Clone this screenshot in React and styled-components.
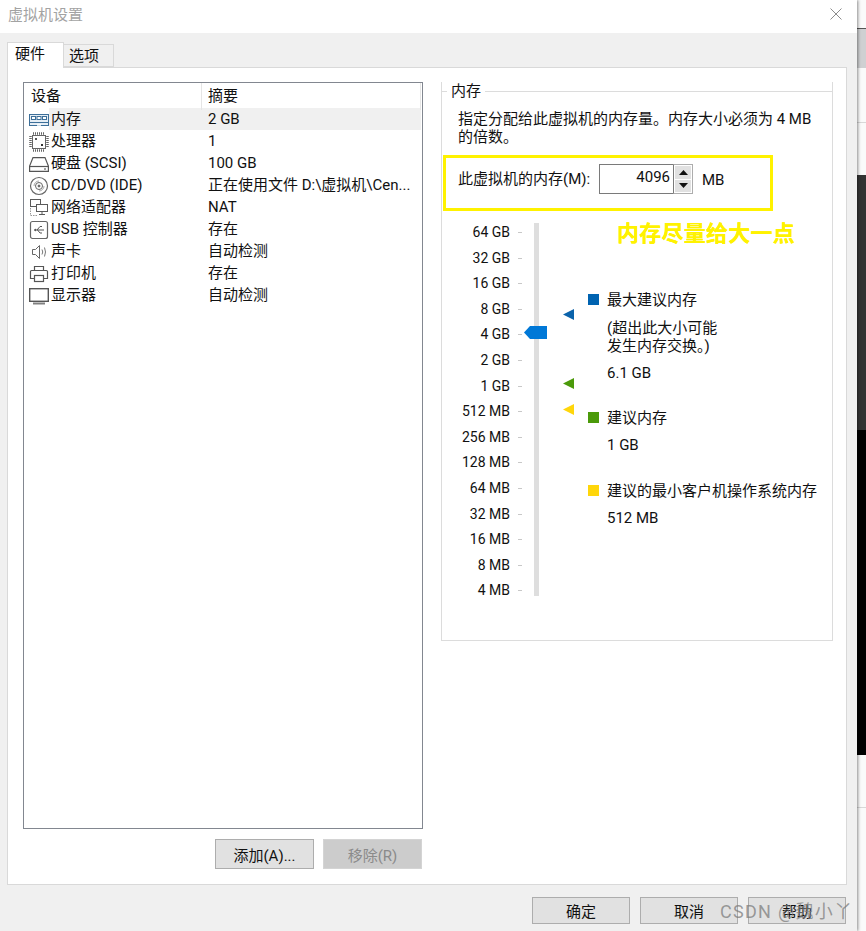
import React from "react"
import styled, { createGlobalStyle } from "styled-components"

const GlobalStyle = createGlobalStyle`
  html, body {
    margin: 0;
    padding: 0;
    background: #fff;
  }
  body {
    font-family: Roboto, "Noto Sans CJK SC", sans-serif;
    font-size: 15px;
    color: #111;
  }
`

const Page = styled.div`
  display: flex;
  width: 866px;
  height: 931px;
  overflow: hidden;
  position: relative;
`
const Dialog = styled.div`
  width: 857px;
  height: 931px;
  flex: none;
  display: flex;
  flex-direction: column;
  background: #f0f0f0;
  position: relative;
  z-index: 1;
  box-shadow: 1px 0 3px rgba(0, 0, 0, 0.45);
`
const TitleBar = styled.div`
  box-sizing: border-box;
  height: 33px;
  flex: none;
  background: #fff;
  display: flex;
  align-items: center;
  justify-content: space-between;
  padding: 0 15px 6px 8px;
  color: #a3a3a3;
`
const Body = styled.div`
  padding: 9px 10px 0 7px;
  flex: 1;
  display: flex;
  flex-direction: column;
`
const Tabs = styled.div`
  display: flex;
  align-items: flex-end;
  height: 25px;
  flex: none;
  position: relative;
  z-index: 1;
`
const Tab = styled.div`
  box-sizing: border-box;
  width: ${p => (p.$active ? "57px" : "50px")};
  height: ${p => (p.$active ? "26px" : "23px")};
  margin-bottom: ${p => (p.$active ? "-1px" : "0")};
  padding: ${p => (p.$active ? "0 0 0 7px" : "0 0 0 5px")};
  background: ${p => (p.$active ? "#fff" : "#f0f0f0")};
  border: 1px solid #d9d9d9;
  border-bottom-width: ${p => (p.$active ? "0" : "1px")};
  border-left-width: ${p => (p.$active ? "1px" : "0")};
  line-height: 22px;
`
const Panel = styled.div`
  box-sizing: border-box;
  width: 840px;
  height: 818px;
  flex: none;
  display: flex;
  background: #fff;
  border: 1px solid #d9d9d9;
  padding: 14px 13px 0 15px;
`
const LeftColumn = styled.div`
  width: 400px;
  margin-right: 18px;
  flex: none;
`
const DeviceList = styled.div`
  box-sizing: border-box;
  height: 747px;
  border: 1px solid #828790;
  padding: 0 1px;
`
const ListHeader = styled.div`
  display: grid;
  grid-template-columns: 177px 1fr;
  height: 25px;
`
const HeaderCell = styled.div`
  padding-left: 6px;
  line-height: 27px;
  border-right: 1px solid #e5e5e5;
`
const DeviceRow = styled.div`
  display: grid;
  grid-template-columns: 177px 1fr;
  height: 22px;
  line-height: 23px;
  background: ${p =>
    p.$selected ? "linear-gradient(to right, #fff 24px, #f0f0f0 24px)" : "none"};
`
const DeviceName = styled.div`
  display: flex;
  align-items: center;
  padding-left: 4px;
  white-space: nowrap;
`
const IconSlot = styled.span`
  width: 20px;
  height: 20px;
  margin-right: 2px;
  flex: none;
  display: block;
  svg {
    display: block;
  }
`
const Summary = styled.div`
  padding-left: 6px;
  white-space: nowrap;
`
const ListActions = styled.div`
  display: flex;
  justify-content: flex-end;
  gap: 9px;
  margin-top: 10px;
  padding-right: 1px;
`
const Button = styled.button`
  box-sizing: border-box;
  width: ${p => (p.$dialog ? "98px" : "99px")};
  height: ${p => (p.$dialog ? "27px" : "30px")};
  padding: 0;
  font: inherit;
  color: ${p => (p.disabled ? "#8a8a8a" : "#111")};
  background: ${p => (p.disabled ? "#cccccc" : "#e1e1e1")};
  border: 1px solid ${p => (p.disabled ? "#d4d4d4" : "#adadad")};
`
const MemoryGroup = styled.section`
  box-sizing: border-box;
  width: 392px;
  height: 559px;
  border: 1px solid #dcdcdc;
  border-top: none;
  position: relative;
  &::before {
    content: "";
    position: absolute;
    top: 9px;
    left: -1px;
    right: -1px;
    border-top: 1px solid #dcdcdc;
  }
`
const GroupLegend = styled.div`
  position: absolute;
  top: 1px;
  left: 5px;
  padding: 0 4px;
  background: #fff;
  line-height: 17px;
`
const Description = styled.p`
  margin: 0;
  padding: 28px 16px 0 16px;
  line-height: 18px;
`
const MarkedRow = styled.div`
  box-sizing: border-box;
  width: 330px;
  height: 56px;
  margin: 9px 0 0 1px;
  border: 3px solid #fff200;
  padding: 6px 0 0 12px;
  display: flex;
  align-items: flex-start;
`
const FieldLabel = styled.span`
  line-height: 30px;
  width: 141px;
  flex: none;
  white-space: nowrap;
`
const Spinner = styled.div`
  width: 94px;
  height: 30px;
  flex: none;
  display: flex;
`
const SpinnerValue = styled.div`
  box-sizing: border-box;
  width: 74px;
  border: 1px solid #7a7a7a;
  border-right: none;
  text-align: right;
  line-height: 24px;
  padding-right: 3px;
`
const SpinnerButtons = styled.div`
  box-sizing: border-box;
  width: 20px;
  padding: 1px;
  display: flex;
  flex-direction: column;
  gap: 1px;
  flex: none;
  border: 1px solid #adadad;
  border-left-color: #7a7a7a;
`
const SpinnerButton = styled.div`
  flex: 1;
  display: flex;
  align-items: center;
  justify-content: center;
  background: #e1e1e1;
`
const UnitLabel = styled.span`
  margin-left: 9px;
  line-height: 33px;
`
const Annotation = styled.div`
  position: absolute;
  left: 175px;
  top: 139px;
  font-size: 22px;
  line-height: 26px;
  font-weight: 700;
  letter-spacing: 0.25px;
  color: #fff200;
  text-shadow: 0 0 0.6px #fff200;
  white-space: nowrap;
`
const SliderArea = styled.div`
  display: flex;
  margin: 12px 0 0 0;
`
const ScaleLabels = styled.div`
  width: 80px;
  padding-top: 1px;
  flex: none;
`
const ScaleLabel = styled.div`
  box-sizing: border-box;
  height: 25.6px;
  line-height: 16px;
  font-size: 14px;
  padding-right: 12px;
  text-align: right;
  white-space: nowrap;
  position: relative;
  &::after {
    content: "";
    position: absolute;
    right: 0;
    top: 8px;
    width: 4px;
    height: 1px;
    background: #c8c8c8;
  }
`
const Track = styled.div`
  width: 5px;
  height: 373px;
  margin-left: 12px;
  background: #dedede;
  flex: none;
  position: relative;
`
const Thumb = styled.svg`
  position: absolute;
  left: -10px;
  top: 103px;
`
const MarkerLane = styled.div`
  width: 49px;
  flex: none;
  position: relative;
`
const Marker = styled.svg`
  position: absolute;
  left: 24px;
  top: ${p => p.$top}px;
`
const Legend = styled.div`
  display: flex;
  flex-direction: column;
  padding-top: 68px;
`
const LegendBlock = styled.div`
  display: grid;
  grid-template-columns: 11px 1fr;
  column-gap: 8px;
  margin-bottom: ${p => p.$gap || 0}px;
  white-space: nowrap;
`
const Swatch = styled.span`
  width: 11px;
  height: 11px;
  margin-top: 3px;
  background: ${p => p.$color};
`
const LegendTitle = styled.div`
  line-height: 18px;
`
const LegendNote = styled.div`
  grid-column: 2;
  line-height: 18px;
  margin-top: 10px;
`
const LegendValue = styled.div`
  grid-column: 2;
  line-height: 18px;
  margin-top: 9px;
`
const Footer = styled.div`
  display: flex;
  justify-content: flex-end;
  gap: 10px;
  margin: 12px 1px 0 0;
`
const Backdrop = styled.div`
  flex: 1;
  display: flex;
  flex-direction: column;
`
const BackdropPiece = styled.div`
  box-sizing: border-box;
  height: ${p => p.$height}px;
  flex: ${p => (p.$height ? "none" : 1)};
  background: ${p => p.$color};
  border-top: ${p => (p.$line ? `1px solid ${p.$line}` : "none")};
`
const Watermark = styled.div`
  position: absolute;
  z-index: 2;
  left: 720px;
  top: 900px;
  font-size: 18px;
  line-height: 24px;
  color: rgba(125, 125, 125, 0.75);
  letter-spacing: 1.3px;
  white-space: nowrap;
`

const CloseIcon = () => (
  <svg width="12" height="12" viewBox="0 0 12 12" fill="none" stroke="#8c8c8c" strokeWidth="1">
    <path d="M0.5 0.5 L11.5 11.5 M11.5 0.5 L0.5 11.5" />
  </svg>
)

const MemoryIcon = () => (
  <svg width="20" height="20" viewBox="0 0 20 20" fill="none">
    <rect x="0.5" y="4.5" width="19" height="11" fill="#e6eef5" stroke="#3d6f99" />
    <rect x="2.5" y="6.5" width="4" height="3" fill="#fff" stroke="#3d6f99" />
    <rect x="8" y="6.5" width="4" height="3" fill="#fff" stroke="#3d6f99" />
    <rect x="13.5" y="6.5" width="4" height="3" fill="#fff" stroke="#3d6f99" />
    <path d="M1 12.5 H19" stroke="#3d6f99" />
    <path d="M8 15 H12" stroke="#fff" strokeWidth="1.5" />
  </svg>
)

const CpuIcon = () => (
  <svg width="20" height="20" viewBox="0 0 20 20" fill="none">
    <rect x="3.5" y="3.5" width="13" height="13" stroke="#666" />
    <path
      d="M4 1.5 H16 M4 18.5 H16 M1.5 4 V16 M18.5 4 V16"
      stroke="#666"
      strokeWidth="2.5"
      strokeDasharray="1 1"
    />
    <rect x="6" y="6" width="2" height="2" fill="#555" />
    <rect x="12" y="12" width="2" height="2" fill="#333" />
  </svg>
)

const DiskIcon = () => (
  <svg width="20" height="20" viewBox="0 0 20 20" fill="none" stroke="#555" strokeWidth="1.2">
    <path d="M4 3.6 H16 L19.4 12 V17.4 H0.6 V12 Z" />
    <path d="M0.6 12.5 H19.4" />
    <path d="M15 15 H17" stroke="#444" />
  </svg>
)

const CdIcon = () => (
  <svg width="20" height="20" viewBox="0 0 20 20" fill="none" stroke="#666">
    <circle cx="10" cy="10" r="8.5" strokeWidth="1.2" />
    <circle cx="10" cy="10" r="3.5" />
    <circle cx="10" cy="10" r="1" fill="#555" />
    <path d="M5 10 A5 5 0 0 1 10 5" stroke="#aaa" />
    <path d="M15 10 A5 5 0 0 1 10 15" stroke="#aaa" />
  </svg>
)

const NetworkIcon = () => (
  <svg width="20" height="20" viewBox="0 0 20 20" fill="none" stroke="#5a5a5a">
    <rect x="1.5" y="1.5" width="10" height="7" fill="#fff" />
    <rect x="7.5" y="6.5" width="11" height="7" fill="#fff" />
    <path d="M13 13.5 V16.5 M10 16.5 H16" />
    <path d="M1.5 10 V17.5 H9" stroke="#999" strokeDasharray="1.5 1" />
  </svg>
)

const UsbIcon = () => (
  <svg width="20" height="20" viewBox="0 0 20 20" fill="none" stroke="#666">
    <rect x="1.5" y="1.5" width="17" height="17" rx="2" strokeWidth="1.2" />
    <path d="M5 10 H15 M8 10 L11 6.5 H13 M8.5 10 L11 13 H13" stroke="#555" />
    <path d="M5 10 L7 8.5 V11.5 Z" fill="#555" stroke="none" />
  </svg>
)

const SpeakerIcon = () => (
  <svg width="20" height="20" viewBox="0 0 20 20" fill="none" stroke="#666">
    <path d="M3.5 7.5 H6.5 L10.5 3.5 V16.5 L6.5 12.5 H3.5 Z" />
    <path d="M13 7.5 Q14.5 10 13 12.5 M15.5 5.5 Q17.5 10 15.5 14.5" stroke="#777" />
  </svg>
)

const PrinterIcon = () => (
  <svg width="20" height="20" viewBox="0 0 20 20" fill="none" stroke="#555" strokeWidth="1.2">
    <path d="M5.5 6.5 V2.5 H14.5 V6.5" />
    <path d="M5 14.5 H1.5 V7.5 Q1.5 6.5 2.5 6.5 H17.5 Q18.5 6.5 18.5 7.5 V14.5 H15" />
    <rect x="5.5" y="11.5" width="9" height="6" />
  </svg>
)

const MonitorIcon = () => (
  <svg width="20" height="20" viewBox="0 0 20 20" fill="none" stroke="#555">
    <rect x="0.7" y="2.7" width="18.6" height="12.6" strokeWidth="1.4" />
    <path d="M4 17.5 H16" strokeWidth="2" stroke="#808080" />
  </svg>
)

const devices = [
  { name: "内存", summary: "2 GB", Icon: MemoryIcon, selected: true },
  { name: "处理器", summary: "1", Icon: CpuIcon },
  { name: "硬盘 (SCSI)", summary: "100 GB", Icon: DiskIcon },
  { name: "CD/DVD (IDE)", summary: "正在使用文件 D:\\虚拟机\\Cen...", Icon: CdIcon },
  { name: "网络适配器", summary: "NAT", Icon: NetworkIcon },
  { name: "USB 控制器", summary: "存在", Icon: UsbIcon },
  { name: "声卡", summary: "自动检测", Icon: SpeakerIcon },
  { name: "打印机", summary: "存在", Icon: PrinterIcon },
  { name: "显示器", summary: "自动检测", Icon: MonitorIcon },
]

const scale = [
  "64 GB", "32 GB", "16 GB", "8 GB", "4 GB", "2 GB", "1 GB", "512 MB",
  "256 MB", "128 MB", "64 MB", "32 MB", "16 MB", "8 MB", "4 MB",
]

const markers = [
  { color: "#0b63ab", top: 86 },
  { color: "#4b9a0a", top: 155 },
  { color: "#ffd60a", top: 181 },
]

const App = () => {
  return (
    <Page>
      <GlobalStyle />
      <Dialog>
        <TitleBar>
          虚拟机设置
          <CloseIcon />
        </TitleBar>
        <Body>
          <Tabs>
            <Tab $active>硬件</Tab>
            <Tab>选项</Tab>
          </Tabs>
          <Panel>
            <LeftColumn>
              <DeviceList>
                <ListHeader>
                  <HeaderCell>设备</HeaderCell>
                  <HeaderCell>摘要</HeaderCell>
                </ListHeader>
                {devices.map(({ name, summary, Icon, selected }) => (
                  <DeviceRow key={name} $selected={selected}>
                    <DeviceName>
                      <IconSlot>
                        <Icon />
                      </IconSlot>
                      {name}
                    </DeviceName>
                    <Summary>{summary}</Summary>
                  </DeviceRow>
                ))}
              </DeviceList>
              <ListActions>
                <Button>添加(A)...</Button>
                <Button disabled>移除(R)</Button>
              </ListActions>
            </LeftColumn>
            <MemoryGroup>
              <GroupLegend>内存</GroupLegend>
              <Description>
                指定分配给此虚拟机的内存量。内存大小必须为 4 MB
                <br />
                的倍数。
              </Description>
              <MarkedRow>
                <FieldLabel>此虚拟机的内存(M):</FieldLabel>
                <Spinner>
                  <SpinnerValue>4096</SpinnerValue>
                  <SpinnerButtons>
                    <SpinnerButton>
                      <svg width="9" height="5" viewBox="0 0 9 5"><path d="M4.5 0 L9 5 H0 Z" fill="#111" /></svg>
                    </SpinnerButton>
                    <SpinnerButton>
                      <svg width="9" height="5" viewBox="0 0 9 5"><path d="M0 0 H9 L4.5 5 Z" fill="#111" /></svg>
                    </SpinnerButton>
                  </SpinnerButtons>
                </Spinner>
                <UnitLabel>MB</UnitLabel>
              </MarkedRow>
              <Annotation>内存尽量给大一点</Annotation>
              <SliderArea>
                <ScaleLabels>
                  {scale.map(label => (
                    <ScaleLabel key={label}>{label}</ScaleLabel>
                  ))}
                </ScaleLabels>
                <Track>
                  <Thumb width="23" height="13" viewBox="0 0 23 13">
                    <path d="M0 6.5 L6 0 H23 V13 H6 Z" fill="#0078d7" />
                  </Thumb>
                </Track>
                <MarkerLane>
                  {markers.map(m => (
                    <Marker key={m.color} $top={m.top} width="11" height="11" viewBox="0 0 11 11">
                      <path d="M0 5.5 L11 0 V11 Z" fill={m.color} />
                    </Marker>
                  ))}
                </MarkerLane>
                <Legend>
                  <LegendBlock $gap={27}>
                    <Swatch $color="#0063b1" />
                    <LegendTitle>最大建议内存</LegendTitle>
                    <LegendNote>
                      (超出此大小可能
                      <br />
                      发生内存交换。)
                    </LegendNote>
                    <LegendValue>6.1 GB</LegendValue>
                  </LegendBlock>
                  <LegendBlock $gap={28}>
                    <Swatch $color="#4b9a0a" />
                    <LegendTitle>建议内存</LegendTitle>
                    <LegendValue>1 GB</LegendValue>
                  </LegendBlock>
                  <LegendBlock>
                    <Swatch $color="#ffd60a" />
                    <LegendTitle>建议的最小客户机操作系统内存</LegendTitle>
                    <LegendValue>512 MB</LegendValue>
                  </LegendBlock>
                </Legend>
              </SliderArea>
            </MemoryGroup>
          </Panel>
          <Footer>
            <Button $dialog>确定</Button>
            <Button $dialog>取消</Button>
            <Button $dialog>帮助</Button>
          </Footer>
        </Body>
      </Dialog>
      <Backdrop>
        <BackdropPiece $height={28} $color="#fafafa" />
        <BackdropPiece $height={40} $color="#cfd0d2" $line="#555" />
        <BackdropPiece $height={54} $color="#fafafa" />
        <BackdropPiece $height={53} $color="#fafafa" $line="#d8d8d8" />
        <BackdropPiece $height={255} $color="#333" />
        <BackdropPiece $height={325} $color="#000" />
        <BackdropPiece $height={52} $color="#fafafa" />
        <BackdropPiece $color="#fafafa" $line="#d8d8d8" />
      </Backdrop>
      <Watermark>CSDN @魏小丫</Watermark>
    </Page>
  )
}

export default App
